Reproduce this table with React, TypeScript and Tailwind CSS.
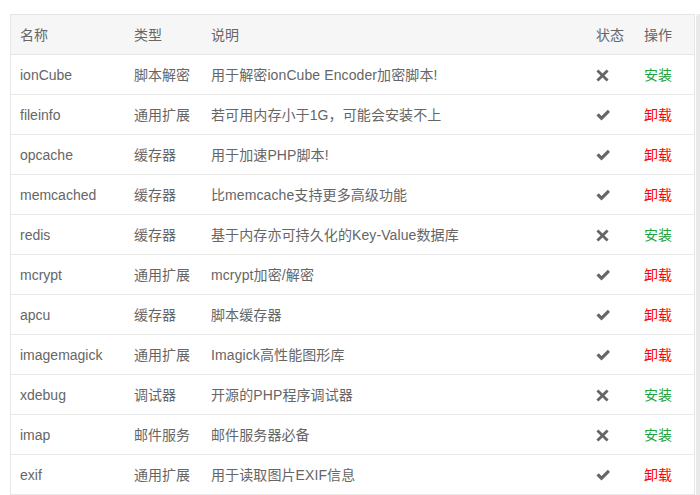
import React from 'react';

interface Plugin {
  name: string;
  type: string;
  desc: string;
  installed: boolean;
}

const plugins: Plugin[] = [
  { name: 'ionCube', type: '脚本解密', desc: '用于解密ionCube Encoder加密脚本!', installed: false },
  { name: 'fileinfo', type: '通用扩展', desc: '若可用内存小于1G，可能会安装不上', installed: true },
  { name: 'opcache', type: '缓存器', desc: '用于加速PHP脚本!', installed: true },
  { name: 'memcached', type: '缓存器', desc: '比memcache支持更多高级功能', installed: true },
  { name: 'redis', type: '缓存器', desc: '基于内存亦可持久化的Key-Value数据库', installed: false },
  { name: 'mcrypt', type: '通用扩展', desc: 'mcrypt加密/解密', installed: true },
  { name: 'apcu', type: '缓存器', desc: '脚本缓存器', installed: true },
  { name: 'imagemagick', type: '通用扩展', desc: 'Imagick高性能图形库', installed: true },
  { name: 'xdebug', type: '调试器', desc: '开源的PHP程序调试器', installed: false },
  { name: 'imap', type: '邮件服务', desc: '邮件服务器必备', installed: false },
  { name: 'exif', type: '通用扩展', desc: '用于读取图片EXIF信息', installed: true },
];

const CheckIcon = () => (
  <svg width="15" height="12" viewBox="0 0 15 12" className="block">
    <path d="M0.5 6.5 L2.7 4.3 L5.5 7.1 L11.8 0.8 L14 3 L5.5 11.5 Z" fill="#666" />
  </svg>
);

const CrossIcon = () => (
  <svg width="13" height="13" viewBox="0 0 12 12" className="block">
    <path
      d="M2.2 0.4 L6 4.2 L9.8 0.4 L11.6 2.2 L7.8 6 L11.6 9.8 L9.8 11.6 L6 7.8 L2.2 11.6 L0.4 9.8 L4.2 6 L0.4 2.2 Z"
      fill="#666"
    />
  </svg>
);

export default function App() {
  return (
    <div
      className="w-[700px] h-[495px] overflow-hidden bg-white flex pt-[14px] pl-[10px]"
      style={{ fontFamily: '"Liberation Sans", "Noto Sans CJK SC", sans-serif' }}
    >
      <div className="w-[685px] border-l border-r border-t border-[#e6e6e6] text-[14px] text-[#666]">
        {/* header */}
        <div className="flex items-center h-[40px] pt-[1px] bg-[#f6f6f6] border-b border-[#e6e6e6]">
          <div className="w-[113px] pl-[9px]">名称</div>
          <div className="w-[77px] pl-[10px]">类型</div>
          <div className="flex-1 pl-[10px]">说明</div>
          <div className="w-[48px] pl-[10px]">状态</div>
          <div className="w-[60px] pl-[10px]">操作</div>
        </div>
        {plugins.map(p => (
          <div key={p.name} className="flex items-center h-[40px] pt-[1px] border-b border-[#eaeaea]">
            <div className="w-[113px] pl-[9px]">{p.name}</div>
            <div className="w-[77px] pl-[10px]">{p.type}</div>
            <div className="flex-1 pl-[10px] tracking-[0.1px]">{p.desc}</div>
            <div className="w-[48px] pl-[10px]">{p.installed ? <CheckIcon /> : <CrossIcon />}</div>
            <div className="w-[60px] pl-[10px]">
              {p.installed ? (
                <span className="text-[#ff0000]">卸载</span>
              ) : (
                <span className="text-[#20a53a]">安装</span>
              )}
            </div>
          </div>
        ))}
      </div>
      {/* scrollbar */}
      <div className="ml-[1px] w-[4px] bg-[#e9e9e9] rounded-tl-[3px]" />
    </div>
  );
}
